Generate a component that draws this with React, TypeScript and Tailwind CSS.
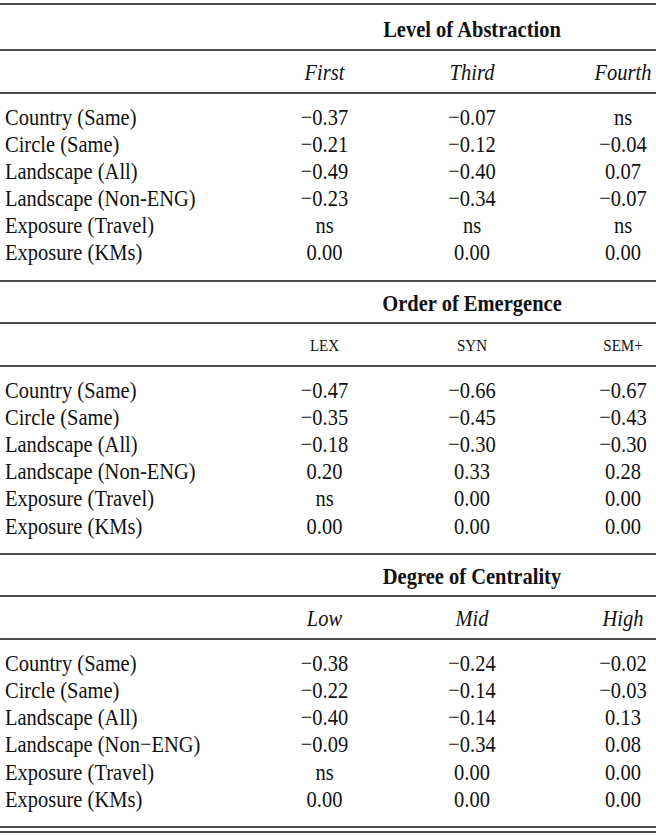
import React from 'react'

type Section = {
    title: string
    heads: string[]
    headStyle: 'italic' | 'small'
    rows: [string, string, string, string][]
}

const sections: Section[] = [
    {
        title: 'Level of Abstraction',
        heads: ['First', 'Third', 'Fourth'],
        headStyle: 'italic',
        rows: [
            ['Country (Same)', '−0.37', '−0.07', 'ns'],
            ['Circle (Same)', '−0.21', '−0.12', '−0.04'],
            ['Landscape (All)', '−0.49', '−0.40', '0.07'],
            ['Landscape (Non-ENG)', '−0.23', '−0.34', '−0.07'],
            ['Exposure (Travel)', 'ns', 'ns', 'ns'],
            ['Exposure (KMs)', '0.00', '0.00', '0.00'],
        ],
    },
    {
        title: 'Order of Emergence',
        heads: ['LEX', 'SYN', 'SEM+'],
        headStyle: 'small',
        rows: [
            ['Country (Same)', '−0.47', '−0.66', '−0.67'],
            ['Circle (Same)', '−0.35', '−0.45', '−0.43'],
            ['Landscape (All)', '−0.18', '−0.30', '−0.30'],
            ['Landscape (Non-ENG)', '0.20', '0.33', '0.28'],
            ['Exposure (Travel)', 'ns', '0.00', '0.00'],
            ['Exposure (KMs)', '0.00', '0.00', '0.00'],
        ],
    },
    {
        title: 'Degree of Centrality',
        heads: ['Low', 'Mid', 'High'],
        headStyle: 'italic',
        rows: [
            ['Country (Same)', '−0.38', '−0.24', '−0.02'],
            ['Circle (Same)', '−0.22', '−0.14', '−0.03'],
            ['Landscape (All)', '−0.40', '−0.14', '0.13'],
            ['Landscape (Non−ENG)', '−0.09', '−0.34', '0.08'],
            ['Exposure (Travel)', 'ns', '0.00', '0.00'],
            ['Exposure (KMs)', '0.00', '0.00', '0.00'],
        ],
    },
]

const grid = 'grid grid-cols-[251px_147px_148px_110px]'
// the source picture is a little taller than Times, so stretch glyphs vertically
const tall = 'scale-y-[1.17] translate-y-[1px]'

function Rule() {
    return <div className="h-[2px] bg-[#4d4d4d]" />
}

function TableSection({ section }: { section: Section }) {
    return (
        <>
            <div className={`${grid} h-[40.5px] items-center`}>
                <div />
                <div className={`col-span-3 pl-[37px] text-center font-bold ${tall}`}>{section.title}</div>
            </div>
            <Rule />
            <div className={`${grid} h-[41px] items-center`}>
                <div />
                {section.heads.map((h, i) => (
                    <div
                        key={h}
                        className={`text-center ${tall} ${i === 2 ? 'pl-[44px]' : ''} ${section.headStyle === 'italic' ? 'italic' : 'text-[15px]'}`}
                    >
                        {h}
                    </div>
                ))}
            </div>
            <Rule />
            <div className="pt-[8.5px] pb-[14px]">
                {section.rows.map((row) => (
                    <div key={row[0]} className={`${grid} h-[27.2px] items-center leading-[27.2px]`}>
                        <div className={`pl-[5px] whitespace-nowrap ${tall}`}>{row[0]}</div>
                        <div className={`text-center ${tall}`}>{row[1]}</div>
                        <div className={`text-center ${tall}`}>{row[2]}</div>
                        <div className={`text-center pl-[44px] ${tall}`}>{row[3]}</div>
                    </div>
                ))}
            </div>
        </>
    )
}

export default function App() {
    return (
        <div className="w-[656px] h-[835px] bg-white pt-[3px] text-[20.5px] text-[#111111] font-['Liberation_Serif',serif]">
            <Rule />
            <div className="h-[3.5px]" />
            {sections.map((s, i) => (
                <React.Fragment key={s.title}>
                    {i > 0 && <Rule />}
                    <TableSection section={s} />
                </React.Fragment>
            ))}
            <Rule />
            <div className="h-[3px]" />
            <Rule />
        </div>
    )
}
